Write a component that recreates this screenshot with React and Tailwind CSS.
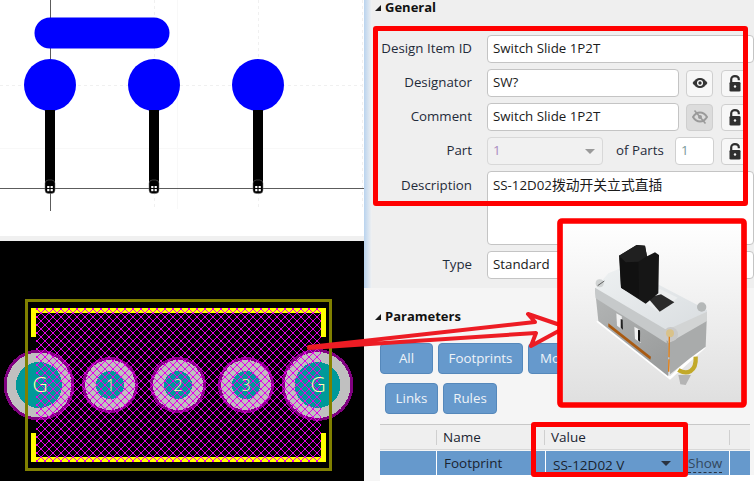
import React from "react";

const font = { fontFamily: '"Open Sans","Noto Sans CJK SC",sans-serif' };

function Schematic() {
  const xs = [50, 154, 258];
  return (
    <svg width="365" height="236" viewBox="0 0 365 236" className="block">
      <g stroke="#f0f0f0" strokeWidth="1" strokeDasharray="3 3" fill="none">
        <path d="M154.5 0V209M258.5 0V209M362.5 0V209M0 85.5H365" />
      </g>
      <path d="M177.5 0V209M0 148.5H365" stroke="#f8f8f8" strokeWidth="1" fill="none" />
      <path d="M50.5 0V211M0 188.5H365" stroke="#5c5c5c" strokeWidth="1" fill="none" />
      <rect x="34.5" y="17.5" width="135" height="31" rx="15.5" fill="#0000ff" />
      {xs.map((x) => (
        <g key={x}>
          <circle cx={x} cy="85" r="26" fill="#0000ff" />
          <rect x={x - 5} y="110" width="10" height="78" fill="#000" />
          <rect x={x - 5} y="180" width="10" height="13.5" rx="3.5" fill="#000" stroke="#777" strokeWidth="0.5" />
          <g fill="#fff">
            <rect x={x - 2.8} y="186" width="2.2" height="2" />
            <rect x={x + 0.6} y="186" width="2.2" height="2" />
            <rect x={x - 2.8} y="189" width="2.2" height="2.2" />
            <rect x={x + 0.6} y="189" width="2.2" height="2.2" />
          </g>
        </g>
      ))}
    </svg>
  );
}

function Pad({ cx, r, inner }) {
  return (
    <g>
      <circle cx={cx} cy="385" r={r} fill="#800080" />
      <circle cx={cx} cy="385" r={r - 3} fill="#c0c0c0" />
      <circle cx={cx} cy="385" r={inner} fill="#009999" />
    </g>
  );
}

function Pcb() {
  return (
    <svg width="365" height="240" viewBox="0 241 365 240" className="block" style={{ shapeRendering: "crispEdges" }}>
      <defs>
        <pattern id="hatch" width="8" height="8" patternUnits="userSpaceOnUse" patternTransform="translate(1 1)">
          <path d="M-1 -1L9 9M-1 9L9 -1" stroke="#e600e6" strokeWidth="1" fill="none" />
        </pattern>
      </defs>
      <rect x="0" y="241" width="365" height="240" fill="#000" />
      <Pad cx={39} r={35.5} inner={23} />
      <Pad cx={110} r={28} inner={14} />
      <Pad cx={178} r={28} inner={14} />
      <Pad cx={246} r={28} inner={14} />
      <Pad cx={317.5} r={36} inner={23} />
      <g fill="#ffff00">
        <path d="M31 308H326V337H321V312.5H36V337H31Z" />
        <path d="M31 433H36V457H321V433H326V462H31Z" />
      </g>
      <rect x="36" y="308" width="285" height="154" fill="url(#hatch)" />
      <rect x="26.5" y="300.5" width="304" height="169" fill="none" stroke="#808000" strokeWidth="3" />
      <g fill="#ffffb0" fontFamily='"Open Sans",sans-serif' fontWeight="300" textAnchor="middle" style={{ shapeRendering: "auto" }}>
        <text x="40" y="392" fontSize="21">G</text>
        <text x="110.5" y="391" fontSize="16">1</text>
        <text x="178" y="391" fontSize="16">2</text>
        <text x="246" y="391" fontSize="16">3</text>
        <text x="318" y="392" fontSize="21">G</text>
      </g>
    </svg>
  );
}

function Tri() {
  return (
    <svg width="8" height="8" viewBox="0 0 8 8">
      <path d="M7 1V7H1Z" fill="#1a1a1a" />
    </svg>
  );
}

function Lock() {
  return (
    <svg width="12" height="17" viewBox="0 0 12 17">
      <path d="M2.2 7.5V4.6C2.2 2.5 3.8 1.2 5.9 1.2S9.8 2.5 9.8 4.6V5.2" fill="none" stroke="#2f2f2f" strokeWidth="2.2" />
      <rect x="0.5" y="7" width="11" height="9.5" rx="1.3" fill="#2f2f2f" />
      <circle cx="6" cy="11.5" r="1.2" fill="#f4f4f4" />
    </svg>
  );
}

function Eye({ off }) {
  const c = off ? "#9a9a9a" : "#333";
  return (
    <svg width="16" height="16" viewBox="0 0 16 16">
      <path d="M1 8C3 4.8 5.2 3.5 8 3.5S13 4.8 15 8C13 11.2 10.8 12.5 8 12.5S3 11.2 1 8Z" fill={off ? "none" : c} stroke={c} strokeWidth={off ? 2 : 1} />
      {off ? (
        <>
          <circle cx="8" cy="8" r="2" fill={c} />
          <path d="M2.5 1.5L13.5 14.5" stroke={c} strokeWidth="1.6" />
        </>
      ) : (
        <>
          <circle cx="8" cy="8" r="3" fill="#fff" />
          <circle cx="8" cy="8" r="1.7" fill={c} />
        </>
      )}
    </svg>
  );
}

const inputCls = "h-full flex items-center bg-white border border-[#c4c4c4] rounded-[4px] pl-[5px] text-[#1a1a1a] text-[13.3px] whitespace-nowrap overflow-hidden";
const iconBtn = "w-[27px] h-[27px] shrink-0 flex items-center justify-center bg-[#f7f7f7] border border-[#cfcfcf] rounded-[4px]";
const labelCls = "w-[93px] shrink-0 text-right text-[13.3px] text-[#1f2b3a] leading-none whitespace-nowrap";

function Row({ label, h, mt, children, top }) {
  return (
    <div className={`flex ${top ? "items-start" : "items-center"} ${h} ${mt} pl-[5px]`}>
      <div className={`${labelCls} ${top ? "pt-[8px]" : ""} mr-[15px]`}>{label}</div>
      {children}
    </div>
  );
}

function Chip({ w, children }) {
  return (
    <div className={`${w} h-[31px] shrink-0 flex items-center justify-center rounded-[4px] bg-[#6699cc] border border-[#5588bb] text-[#eef3f8] text-[13.3px]`}>
      {children}
    </div>
  );
}

function Panel() {
  return (
    <div className="relative flex-1 h-full flex flex-col bg-[#efefef] overflow-hidden" style={font}>
      <div className="absolute left-0 top-0 bottom-0 w-[8px] bg-gradient-to-r from-[#b9d3ee] to-[#f2f2f2]" />
      <div className="relative h-[288px] shrink-0 pl-[10px]">
        <div className="flex items-center h-[15px] gap-[3px] font-bold text-[13px] text-[#111]">
          <Tri />
          <span className="leading-[15px]">General</span>
        </div>
        <div className="w-[380px]">
          <Row label="Design Item ID" h="h-[28px]" mt="mt-[20px]">
            <div className={`${inputCls} flex-1`}>Switch Slide 1P2T</div>
          </Row>
          <Row label="Designator" h="h-[28px]" mt="mt-[6px]">
            <div className={`${inputCls} w-[192px] shrink-0`}>SW?</div>
            <div className={`${iconBtn} ml-[7px]`}><Eye /></div>
            <div className={`${iconBtn} ml-[8px]`}><Lock /></div>
          </Row>
          <Row label="Comment" h="h-[28px]" mt="mt-[6px]">
            <div className={`${inputCls} w-[192px] shrink-0`}>Switch Slide 1P2T</div>
            <div className={`${iconBtn} ml-[7px] !bg-[#dcdcdc]`}><Eye off /></div>
            <div className={`${iconBtn} ml-[8px]`}><Lock /></div>
          </Row>
          <Row label="Part" h="h-[28px]" mt="mt-[6px]">
            <div className="w-[116px] h-full shrink-0 flex items-center justify-between bg-[#f1f1f1] border border-[#d8d8d8] rounded-[4px] pl-[5px] pr-[7px] text-[13.3px] text-[#a98cc0]">
              <span>1</span>
              <span className="w-0 h-0 border-x-[5px] border-x-transparent border-t-[5px] border-t-[#9a9a9a]" />
            </div>
            <div className="ml-[13px] w-[47px] shrink-0 text-[13.3px] text-[#1f2b3a] whitespace-nowrap">of Parts</div>
            <div className="w-[39px] h-full shrink-0 flex items-center bg-white border border-[#d0d0d0] rounded-[4px] pl-[5px] text-[13.3px] text-[#7a9a9a] ml-[12px]">1</div>
            <div className={`${iconBtn} ml-[7px]`}><Lock /></div>
          </Row>
          <Row label="Description" h="h-[74px]" mt="mt-[6px]" top>
            <div className={`${inputCls} flex-1 !items-start pt-[4px]`}>
              <span className="leading-[18px]">SS-12D02<span className="text-[13.8px]">拨动开关立式直插</span></span>
            </div>
          </Row>
          <Row label="Type" h="h-[28px]" mt="mt-[6px]">
            <div className={`${inputCls} flex-1`}>Standard</div>
          </Row>
        </div>
      </div>
      <div className="relative flex-1 bg-[#f5f5f5] pl-[10px]">
        <div className="flex items-center h-[15px] mt-[21px] gap-[3px] font-bold text-[13px] text-[#111]">
          <Tri />
          <span className="leading-[15px]">Parameters</span>
        </div>
        <div className="flex gap-[5px] ml-[6px] mt-[19px]">
          <Chip w="w-[53px]">All</Chip>
          <Chip w="w-[85px]">Footprints</Chip>
          <Chip w="w-[70px]"><span className="w-full pl-[11px]">Models</span></Chip>
        </div>
        <div className="flex gap-[5px] ml-[11px] mt-[9px]">
          <Chip w="w-[53px]">Links</Chip>
          <Chip w="w-[54px]">Rules</Chip>
        </div>
        <div className="ml-[6px] mt-[10px] w-[370px] border-t border-[#c8c8c8] text-[13.5px] text-[#1a2430]">
          <div className="flex items-center h-[24px] bg-[#efefef]">
            <div className="w-[57px] h-[15px] border-r border-[#cfcfcf]" />
            <div className="w-[108px] h-[15px] border-r border-[#cfcfcf] pl-[6px] leading-[15px]">Name</div>
            <div className="w-[185px] h-[15px] border-r border-[#cfcfcf] pl-[6px] leading-[15px]">Value</div>
          </div>
          <div className="h-[1px] bg-[#d8d8d8]" />
          <div className="flex h-[24px] bg-[#6699cc] mt-[1px] items-center">
            <div className="w-[57px] h-full border-r border-white" />
            <div className="w-[109px] h-full border-r border-white pl-[7px] leading-[24px]">Footprint</div>
            <div className="w-[131px] h-full pl-[7px] pr-[6px] flex items-center justify-between leading-none pt-[5px]">
              <span>SS-12D02 V</span>
              <span className="w-0 h-0 border-x-[5px] border-x-transparent border-t-[5px] border-t-[#2a3340] mb-[4px]" />
            </div>
            <div className="w-[53px] h-full border-r border-white pl-[11px] leading-[24px]">
              <span className="border-b border-dashed border-[#2a3340] text-[#33475c]">Show</span>
            </div>
          </div>
        </div>
        <div className="absolute left-[16px] right-0 bottom-0 h-[6px] bg-white" />
      </div>
    </div>
  );
}

function Switch3D() {
  return (
    <svg viewBox="0 0 597 585" width="199" height="195">
      <defs>
        <linearGradient id="bg3d" x1="0" y1="0" x2="0" y2="1">
          <stop offset="0" stopColor="#ffffff" />
          <stop offset="1" stopColor="#dfdfdf" />
        </linearGradient>
        <linearGradient id="front3d" x1="0" y1="0" x2="0.6" y2="1">
          <stop offset="0" stopColor="#b4b6b6" />
          <stop offset="1" stopColor="#9b9d9d" />
        </linearGradient>
        <linearGradient id="top3d" x1="0" y1="0" x2="1" y2="1">
          <stop offset="0" stopColor="#eef1f2" />
          <stop offset="1" stopColor="#d9dde0" />
        </linearGradient>
      </defs>
      <rect x="15" y="18" width="552" height="552" rx="6" fill="url(#bg3d)" stroke="#ff0000" strokeWidth="17" />
      <path d="M124 320L345 494L452 398L440 392L345 484L130 316Z" fill="#ffffff" />
      <path d="M120 222L340 355L340 484L130 318Z" fill="url(#front3d)" />
      <path d="M335 350L456 295L452 395L405 430L345 478Z" fill="#a9abab" />
      <path d="M120 222L160 175L208 155L456 285L456 300L335 352Z" fill="url(#top3d)" />
      <path d="M120 218L335 345L335 385L122 250Z" fill="#c6c9ca" />
      <path d="M335 345L456 290L456 318L340 385Z" fill="#d2d4d4" />
      <path d="M160 325L288 425L286 434L160 335Z" fill="#a85a12" />
      <path d="M184 295L200 304L204 345L186 332Z" fill="#f1f1f1" />
      <path d="M197 312L203 314L204 345L197 338Z" fill="#222" />
      <path d="M238 335L254 344L258 384L240 372Z" fill="#f1f1f1" />
      <path d="M249 344L255 346L256 382L249 376Z" fill="#111" />
      <path d="M270 240L315 222L368 248L312 292L270 262Z" fill="#eceeef" />
      <path d="M278 248L318 238L358 262L314 290Z" fill="#2a2a2a" />
      <path d="M192 122L245 90L270 92L276 124L300 112L312 120L310 235L272 266L198 218Z" fill="#161616" />
      <path d="M250 130L252 250L198 218L194 130Z" fill="#111" />
      <path d="M192 122L245 90L270 92L276 124L250 140L212 142Z" fill="#202020" />
      <circle cx="347" cy="358" r="22" fill="#c9c9c9" />
      <circle cx="345" cy="355" r="12" fill="#d9c28a" />
      <path d="M343 365L341 470" stroke="#e07c10" strokeWidth="4" strokeDasharray="62 6" />
      <circle cx="440" cy="276" r="14" fill="#b5b8b8" />
      <circle cx="134" cy="205" r="12" fill="#d0d3d3" />
      <path d="M128 212L148 198" stroke="#222" strokeWidth="2" />
      <path d="M370 480L408 480L392 510L376 508Z" fill="#b4b4b4" />
      <path d="M370 465C395 480 425 472 422 425" stroke="#c2a92a" strokeWidth="13" fill="none" />
    </svg>
  );
}

export default function App() {
  return (
    <div className="relative w-[754px] h-[481px] flex overflow-hidden bg-white">
      <div className="w-[364px] h-full shrink-0 flex flex-col">
        <div className="h-[236px] bg-white overflow-hidden"><Schematic /></div>
        <div className="h-[5px] bg-[#f0f0f0]" />
        <div className="flex-1 overflow-hidden"><Pcb /></div>
      </div>
      <Panel />

      <div className="absolute left-[373px] top-[26px] w-[375px] h-[180px] border-[5px] border-[#ff0000] rounded-[3px]" />
      <div className="absolute left-[531px] top-[422px] w-[157px] h-[55px] border-[5px] border-[#ff0000] rounded-[3px]" />
      <svg className="absolute left-0 top-0 pointer-events-none" width="754" height="481">
        <path d="M309 347L535 322L528 314L566 327L531 346L536 333L309 348Z" fill="none" stroke="#ed1c24" strokeWidth="4" strokeLinejoin="round" />
      </svg>
      <div className="absolute left-[555px] top-[215px]"><Switch3D /></div>
    </div>
  );
}
